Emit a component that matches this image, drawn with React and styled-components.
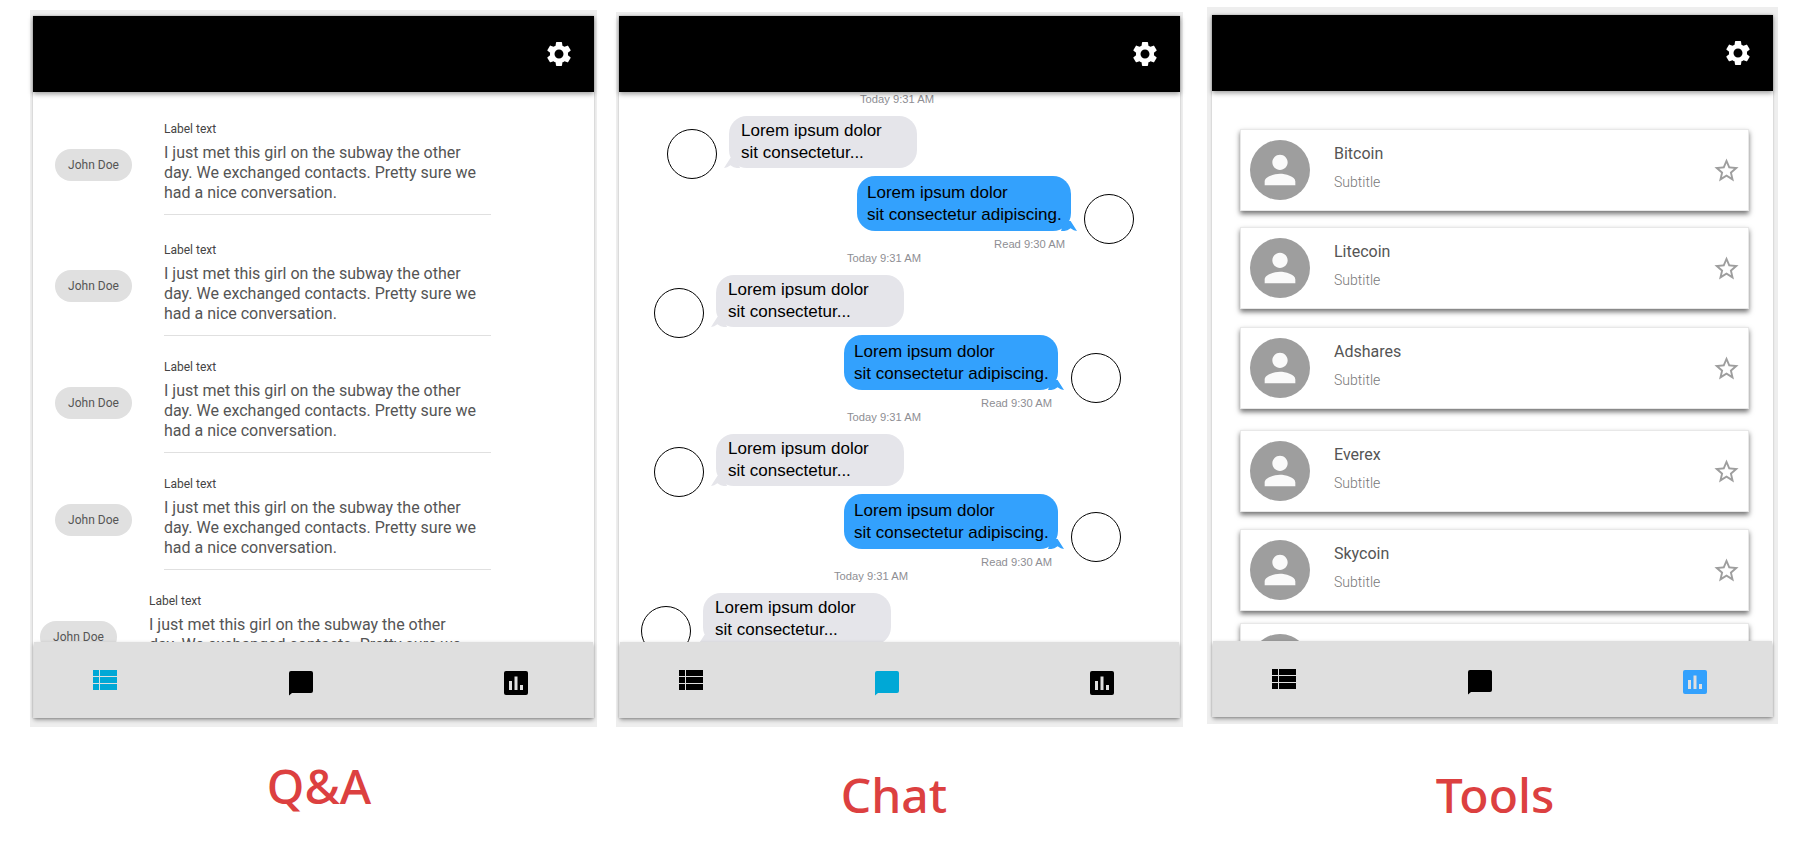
import React from 'react'
import styled, { createGlobalStyle } from 'styled-components'
import { MdSettings, MdStarBorder, MdPerson } from 'react-icons/md'

const GlobalStyle = createGlobalStyle`
  html, body {
    margin: 0;
    background: #fff;
    overflow: hidden;
  }
`

const Page = styled.div`
  width: 1800px;
  height: 864px;
  display: flex;
  align-items: flex-start;
  padding-left: 30px;
  box-sizing: border-box;
  font-family: Roboto, sans-serif;
`
const Column = styled.div`
  width: ${p => p.$width}px;
  margin-left: ${p => p.$left}px;
  margin-top: ${p => p.$top}px;
`
const Frame = styled.div`
  background: #eeeeee;
  padding: ${p => p.$pad};
`
const Phone = styled.div`
  height: ${p => p.$height}px;
  display: flex;
  flex-direction: column;
  background: #fff;
  box-shadow: 0 0 2px rgba(0, 0, 0, 0.25);
  position: relative;
`
const Header = styled.div`
  flex: 0 0 76px;
  background: #000;
  color: #fff;
  display: flex;
  align-items: center;
  justify-content: flex-end;
  padding-right: 20px;
  box-shadow: 0 2px 5px rgba(0, 0, 0, 0.4);
  position: relative;
  z-index: 1;
  svg {
    display: block;
    margin-top: -1px;
  }
`
const Body = styled.div`
  flex: 1;
  min-height: 0;
  overflow: hidden;
`
const Footer = styled.div`
  flex: 0 0 76px;
  background: #dfdfdf;
  margin: 0 1px;
  box-sizing: border-box;
  padding: 28px 0 0 59px;
  display: grid;
  grid-template-columns: 196px 215px 24px;
  align-items: start;
  box-shadow: 0 2px 4px rgba(0, 0, 0, 0.35);
  position: relative;
`
const Caption = styled.div`
  margin-top: ${p => p.$top}px;
  margin-left: ${p => p.$dx}px;
  text-align: center;
  font-family: "Noto Sans", "Open Sans", sans-serif;
  font-weight: 500;
  font-size: 48px;
  line-height: 64px;
  color: #dc4040;
`

/* Q&A */
const Item = styled.div`
  display: flex;
  margin-top: ${p => p.$top}px;
  margin-left: ${p => p.$shift + 22}px;
`
const Chip = styled.div`
  flex: 0 0 77px;
  height: 32px;
  margin-top: 28px;
  margin-right: 32px;
  border-radius: 16px;
  background: #e0e0e0;
  color: #555;
  font-size: 12px;
  line-height: 32px;
  text-align: center;
`
const ItemText = styled.div`
  width: 327px;
  padding-bottom: 11px;
  border-bottom: 1px solid #e0e0e0;
`
const Label = styled.div`
  font-size: 12px;
  line-height: 16px;
  color: #444;
  margin-bottom: 6px;
`
const Message = styled.div`
  max-width: 318px;
  font-size: 16px;
  line-height: 20px;
  color: #555;
`

/* Chat */
const Group = styled.div`
  width: 561px;
  margin-left: ${p => p.$shift}px;
  margin-bottom: 0;
`
const Stamp = styled.div`
  height: 14px;
  font: 400 11.2px/14px "Liberation Sans", Arial, sans-serif;
  color: #8e8e93;
  text-align: center;
  padding-right: 5px;
`
const Row = styled.div`
  display: flex;
  gap: ${p => (p.$mine ? 13 : 12)}px;
  justify-content: ${p => (p.$mine ? 'flex-end' : 'flex-start')};
  padding: ${p => (p.$mine ? '0 46px 0 0' : '0 0 0 48px')};
  margin-top: ${p => (p.$mine ? 8 : 10)}px;
`
const Circle = styled.div`
  width: 50px;
  height: 50px;
  flex: none;
  box-sizing: border-box;
  border: 1px solid #000;
  border-radius: 50%;
  margin-top: ${p => (p.$mine ? 18 : 13)}px;
  margin-bottom: ${p => (p.$mine ? -13 : -11)}px;
`
const Bubble = styled.div`
  position: relative;
  box-sizing: border-box;
  width: ${p => (p.$mine ? 214 : 188)}px;
  height: ${p => (p.$mine ? 55 : 52)}px;
  padding: ${p => (p.$mine ? '6px 0 0 10px' : '4px 0 0 12px')};
  border-radius: 18px;
  background: ${p => (p.$mine ? '#33a1fd' : '#e5e5ea')};
  color: #000;
  font: 17px/22px "Liberation Sans", Arial, sans-serif;
  white-space: pre-line;
  &::before {
    content: '';
    position: absolute;
    bottom: 0;
    width: 16px;
    height: 10px;
    background: inherit;
    ${p => (p.$mine
      ? 'right: -6px; clip-path: polygon(20% 0, 60% 0, 100% 100%, 80% 92%, 60% 72%, 40% 92%, 20% 100%, 0 100%);'
      : 'left: -5px; clip-path: polygon(80% 0, 40% 0, 0 100%, 20% 92%, 40% 72%, 60% 92%, 80% 100%, 100% 100%);')}
  }
`
const Read = styled.div`
  margin-top: 6px;
  padding-right: 115px;
  height: 14px;
  font: 400 11.2px/14px "Liberation Sans", Arial, sans-serif;
  color: #8e8e93;
  text-align: right;
`

/* Tools */
const Card = styled.div`
  box-sizing: border-box;
  width: 509px;
  height: 82px;
  margin-top: ${p => p.$top}px;
  margin-left: 28px;
  display: flex;
  align-items: center;
  padding: 0 7px 0 9px;
  background: #fff;
  border: 1px solid #e8e8e8;
  box-shadow: 0 3px 5px rgba(0, 0, 0, 0.55);
`
const Avatar = styled.div`
  width: 60px;
  height: 60px;
  flex: none;
  border-radius: 50%;
  background: #9e9e9e;
  color: #fafafa;
  display: flex;
  align-items: center;
  justify-content: center;
`
const CardText = styled.div`
  flex: 1;
  margin-left: 24px;
  margin-top: -7px;
`
const CardTitle = styled.div`
  font-size: 16px;
  line-height: 20px;
  color: #555;
`
const CardSub = styled.div`
  font-size: 14px;
  font-weight: 300;
  line-height: 16px;
  margin-top: 10px;
  color: #777;
`
const Star = styled(MdStarBorder)`
  color: #9e9e9e;
  display: block;
`

const tabColor = (active, color) => (active ? color : '#000')

function ListIcon({ color }) {
  return (
    <svg width="24" height="26" viewBox="0 0 24 26" fill={color}>
      <path d="M0 0h6v6H0zM7 0h17v6H7zM0 7h6v6H0zM7 7h17v6H7zM0 14h6v6H0zM7 14h17v6H7z" />
    </svg>
  )
}

function ChatIcon({ color }) {
  return (
    <svg width="24" height="26" viewBox="0 0 24 26" fill={color}>
      <path d="M2 1h20a2 2 0 0 1 2 2v18a2 2 0 0 1-2 2H3l-3 2.400V3a2 2 0 0 1 2-2z" />
    </svg>
  )
}

function BarsIcon({ color }) {
  return (
    <svg width="24" height="26" viewBox="0 0 24 26">
      <path fill={color} d="M2 1h20a2 2 0 0 1 2 2v20a2 2 0 0 1-2 2H2a2 2 0 0 1-2-2V3a2 2 0 0 1 2-2z" />
      <path fill="#dfdfdf" d="M5 11h3v9H5zM10.500 6.500h3V20h-3zM16 15h3v5h-3z" />
    </svg>
  )
}

function Tabs({ active, on }) {
  return (
    <Footer>
      <ListIcon color={tabColor(active === 0, on)} />
      <ChatIcon color={tabColor(active === 1, on)} />
      <BarsIcon color={tabColor(active === 2, on)} />
    </Footer>
  )
}

const qaItems = [
  { top: 29, shift: 0 },
  { top: 27, shift: 0 },
  { top: 23, shift: 0 },
  { top: 23, shift: 0 },
  { top: 23, shift: -15 },
]

const chatGroups = [0, -13, -13, -26]

const coins = [
  { name: 'Bitcoin', top: 38 },
  { name: 'Litecoin', top: 16 },
  { name: 'Adshares', top: 18 },
  { name: 'Everex', top: 21 },
  { name: 'Skycoin', top: 17 },
  { name: 'Golem', top: 12 },
]

function QaPanel() {
  return (
    <Column $width={567} $left={0} $top={10}>
      <Frame $pad="6px 3px 9px">
        <Phone $height={702}>
          <Header><MdSettings size={30} /></Header>
          <Body>
            {qaItems.map((item, i) => (
              <Item key={i} $top={item.top} $shift={item.shift}>
                <Chip>John Doe</Chip>
                <ItemText>
                  <Label>Label text</Label>
                  <Message>
                    I just met this girl on the subway the other day. We exchanged contacts. Pretty sure we had a nice conversation.
                  </Message>
                </ItemText>
              </Item>
            ))}
          </Body>
          <Tabs active={0} on="#00a8d6" />
        </Phone>
      </Frame>
      <Caption $top={27} $dx={11}>Q&amp;A</Caption>
    </Column>
  )
}

function ChatPanel() {
  return (
    <Column $width={567} $left={19} $top={12}>
      <Frame $pad="4px 3px 9px">
        <Phone $height={702}>
          <Header><MdSettings size={30} /></Header>
          <Body>
            {chatGroups.map((shift, i) => (
              <Group key={i} $shift={shift}>
                <Stamp>Today 9:31 AM</Stamp>
                <Row>
                  <Circle />
                  <Bubble>{'Lorem ipsum dolor\nsit consectetur...'}</Bubble>
                </Row>
                <Row $mine>
                  <Bubble $mine>{'Lorem ipsum dolor\nsit consectetur adipiscing.'}</Bubble>
                  <Circle $mine />
                </Row>
                <Read>Read 9:30 AM</Read>
              </Group>
            ))}
          </Body>
          <Tabs active={1} on="#00a8d6" />
        </Phone>
      </Frame>
      <Caption $top={36} $dx={-11}>Chat</Caption>
    </Column>
  )
}

function ToolsPanel() {
  return (
    <Column $width={571} $left={24} $top={7}>
      <Frame $pad="8px 5px 7px">
        <Phone $height={702}>
          <Header><MdSettings size={30} /></Header>
          <Body>
            {coins.map(coin => (
              <Card key={coin.name} $top={coin.top}>
                <Avatar><MdPerson size={46} /></Avatar>
                <CardText>
                  <CardTitle>{coin.name}</CardTitle>
                  <CardSub>Subtitle</CardSub>
                </CardText>
                <Star size={29} />
              </Card>
            ))}
          </Body>
          <Tabs active={2} on="#33a1fd" />
        </Phone>
      </Frame>
      <Caption $top={39} $dx={5}>Tools</Caption>
    </Column>
  )
}

export default function App() {
  return (
    <Page>
      <GlobalStyle />
      <QaPanel />
      <ChatPanel />
      <ToolsPanel />
    </Page>
  )
}
